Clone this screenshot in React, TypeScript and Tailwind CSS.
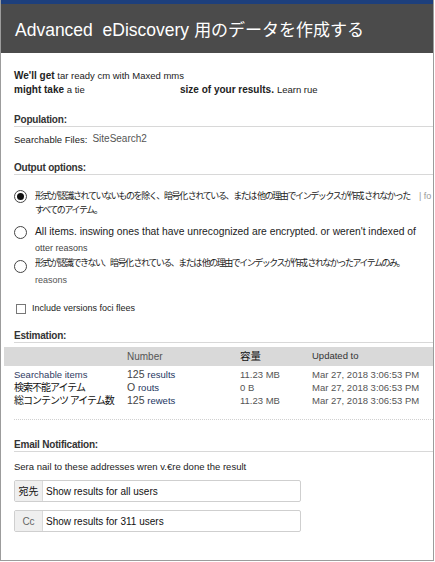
import React from "react";

function Radio({ checked }: { checked?: boolean }) {
  return (
    <span className="flex h-[13px] w-[13px] shrink-0 items-center justify-center rounded-full border border-[#444] bg-white">
      {checked && <span className="h-[7px] w-[7px] rounded-full bg-[#111]" />}
    </span>
  );
}

function SectionHeading({ children }: { children: React.ReactNode }) {
  return (
    <div className="h-[14px] border-b border-[#d8d8d8] text-[10px] leading-[13px] font-bold tracking-[-0.2px] text-[#333]">
      {children}
    </div>
  );
}

const rows = [
  { label: "Searchable items", num: "125", unit: "results", size: "11.23 MB", date: "Mar 27, 2018 3:06:53 PM" },
  { label: "検索不能アイテム", num: "O", unit: "routs", size: "0 B", date: "Mar 27, 2018 3:06:53 PM" },
  { label: "総コンテンツ アイテム数", num: "125", unit: "rewets", size: "11.23 MB", date: "Mar 27, 2018 3:06:53 PM" },
];

export default function App() {
  return (
    <div className="h-[562px] w-[435px] overflow-hidden bg-white font-['Liberation_Sans','Noto_Sans_CJK_JP',sans-serif] text-[#222]">
      <div className="flex h-[561px] w-[434px] flex-col overflow-hidden border-x border-b border-[#9c9c9c]">
        <header className="flex h-[53px] shrink-0 items-center border-t-4 border-[#1d3f7c] bg-[#4b4b4b] pl-[14px] pt-[4px] text-[17.5px] text-white">
          <span>Advanced&nbsp; eDiscovery</span>
          <span className="ml-[5px] text-[17px]">用のデータを作成する</span>
        </header>

        <main className="flex flex-col pl-[13px]">
          <div className="mt-[16px] text-[10px] leading-[14px]">
            <div>
              <span className="font-bold">We'll get</span>{" "}
              <span className="text-[9.5px]">tar ready cm with Maxed mms</span>
            </div>
            <div className="flex">
              <span className="w-[166px]">
                <span className="font-bold">might take</span>{" "}
                <span className="text-[9.5px]">a tie</span>
              </span>
              <span className="font-bold">size of your results.</span>
              <span className="ml-[3px] text-[9.5px]">Learn rue</span>
            </div>
          </div>

          <div className="mt-[16px]">
            <SectionHeading>Population:</SectionHeading>
          </div>
          <div className="mt-[6px] flex h-[14px] items-center text-[9.5px]">
            <span>Searchable Files:</span>
            <span className="ml-[5px] -mt-[3px] text-[10px] text-[#555]">SiteSearch2</span>
          </div>

          <div className="mt-[14px]">
            <SectionHeading>Output options:</SectionHeading>
          </div>

          <div className="mt-[14px] flex gap-[8px] whitespace-nowrap">
            <div className="pt-[1px]">
              <Radio checked />
            </div>
            <div className="text-[9px] leading-[14px]">
              <div className="flex">
                <span className="tracking-[-1.4px]">形式が認識されていないものを除く、暗号化 されている、または 他の理由でインデックスが作成 されなかった</span>
                <span className="ml-[9px] text-[9px] text-[#999]">| fo</span>
              </div>
              <div className="tracking-[-1.4px]">すべてのアイテム。</div>
            </div>
          </div>

          <div className="mt-[8px] flex gap-[8px] whitespace-nowrap">
            <div className="pt-[1px]">
              <Radio />
            </div>
            <div className="text-[10.3px] leading-[14px]">
              <div>All items. inswing ones that have unrecognized are encrypted. or weren't indexed of</div>
              <div className="mt-[2px] text-[9px] text-[#444]">otter reasons</div>
            </div>
          </div>

          <div className="mt-[1px] flex gap-[8px] whitespace-nowrap">
            <div className="pt-[4px]">
              <Radio />
            </div>
            <div className="leading-[14px]">
              <div className="text-[9px] tracking-[-1.5px]">形式が認識できない、暗号化 されている、または 他の理由でインデックスが作成 されなかったアイテムのみ。</div>
              <div className="mt-[3px] text-[9px] text-[#555]">reasons</div>
            </div>
          </div>

          <div className="mt-[15px] flex h-[14px] items-center">
            <span className="ml-[2px] h-[10px] w-[10px] border border-[#777] bg-white" />
            <span className="ml-[6px] text-[9px]">Include versions foci flees</span>
          </div>

          <div className="mt-[13px]">
            <SectionHeading>Estimation:</SectionHeading>
          </div>

          <div className="-ml-[10px] mt-[4px] grid h-[19px] grid-cols-[123px_113px_72px_1fr] items-center bg-[#d9d9d9] text-[10px]">
            <span />
            <span className="text-[#555]">Number</span>
            <span className="text-[10.5px] text-[#111]">容量</span>
            <span className="text-[9.5px] text-[#333]">Updated to</span>
          </div>

          <div className="mt-[2px] flex flex-col">
            {rows.map((r) => (
              <div
                key={r.label}
                className="grid h-[13px] grid-cols-[113px_113px_72px_1fr] items-center whitespace-nowrap text-[10px] leading-[13px]"
              >
                <span
                  className={
                    r.label === "Searchable items"
                      ? "text-[9.5px] text-[#2f3b63]"
                      : "text-[10px] tracking-[-1px] text-[#111]"
                  }
                >
                  {r.label}
                </span>
                <span>
                  <span className="text-[10.5px] text-[#444]">{r.num}</span>{" "}
                  <span className="text-[9.5px] text-[#23365f]">{r.unit}</span>
                </span>
                <span className="text-[9.5px] text-[#555]">{r.size}</span>
                <span className="text-[9.5px] text-[#555]">{r.date}</span>
              </div>
            ))}
          </div>

          <div className="mt-[12px] border-t border-dotted border-[#d0d0d0]" />

          <div className="mt-[18px]">
            <SectionHeading>Email Notification:</SectionHeading>
          </div>

          <div className="mt-[8px] h-[14px] text-[9.5px] leading-[14px]">
            Sera nail to these addresses wren v.€re done the result
          </div>

          <div className="mt-[6px] flex h-[22px] w-[287px] overflow-hidden rounded-[2px] border border-[#cfcfcf] bg-white">
            <span className="flex w-[28px] items-center justify-center border-r border-[#dadada] bg-[#efefef] text-[10px] text-[#111]">
              宛先
            </span>
            <span className="flex items-center pl-[3px] text-[10px] text-[#111]">Show results for all users</span>
          </div>

          <div className="mt-[8px] flex h-[22px] w-[287px] overflow-hidden rounded-[2px] border border-[#cfcfcf] bg-white">
            <span className="flex w-[28px] items-center justify-center border-r border-[#dadada] bg-[#efefef] text-[10px] text-[#666]">
              Cc
            </span>
            <span className="flex items-center pl-[3px] text-[10px] text-[#111]">Show results for 311 users</span>
          </div>
        </main>
      </div>
    </div>
  );
}
